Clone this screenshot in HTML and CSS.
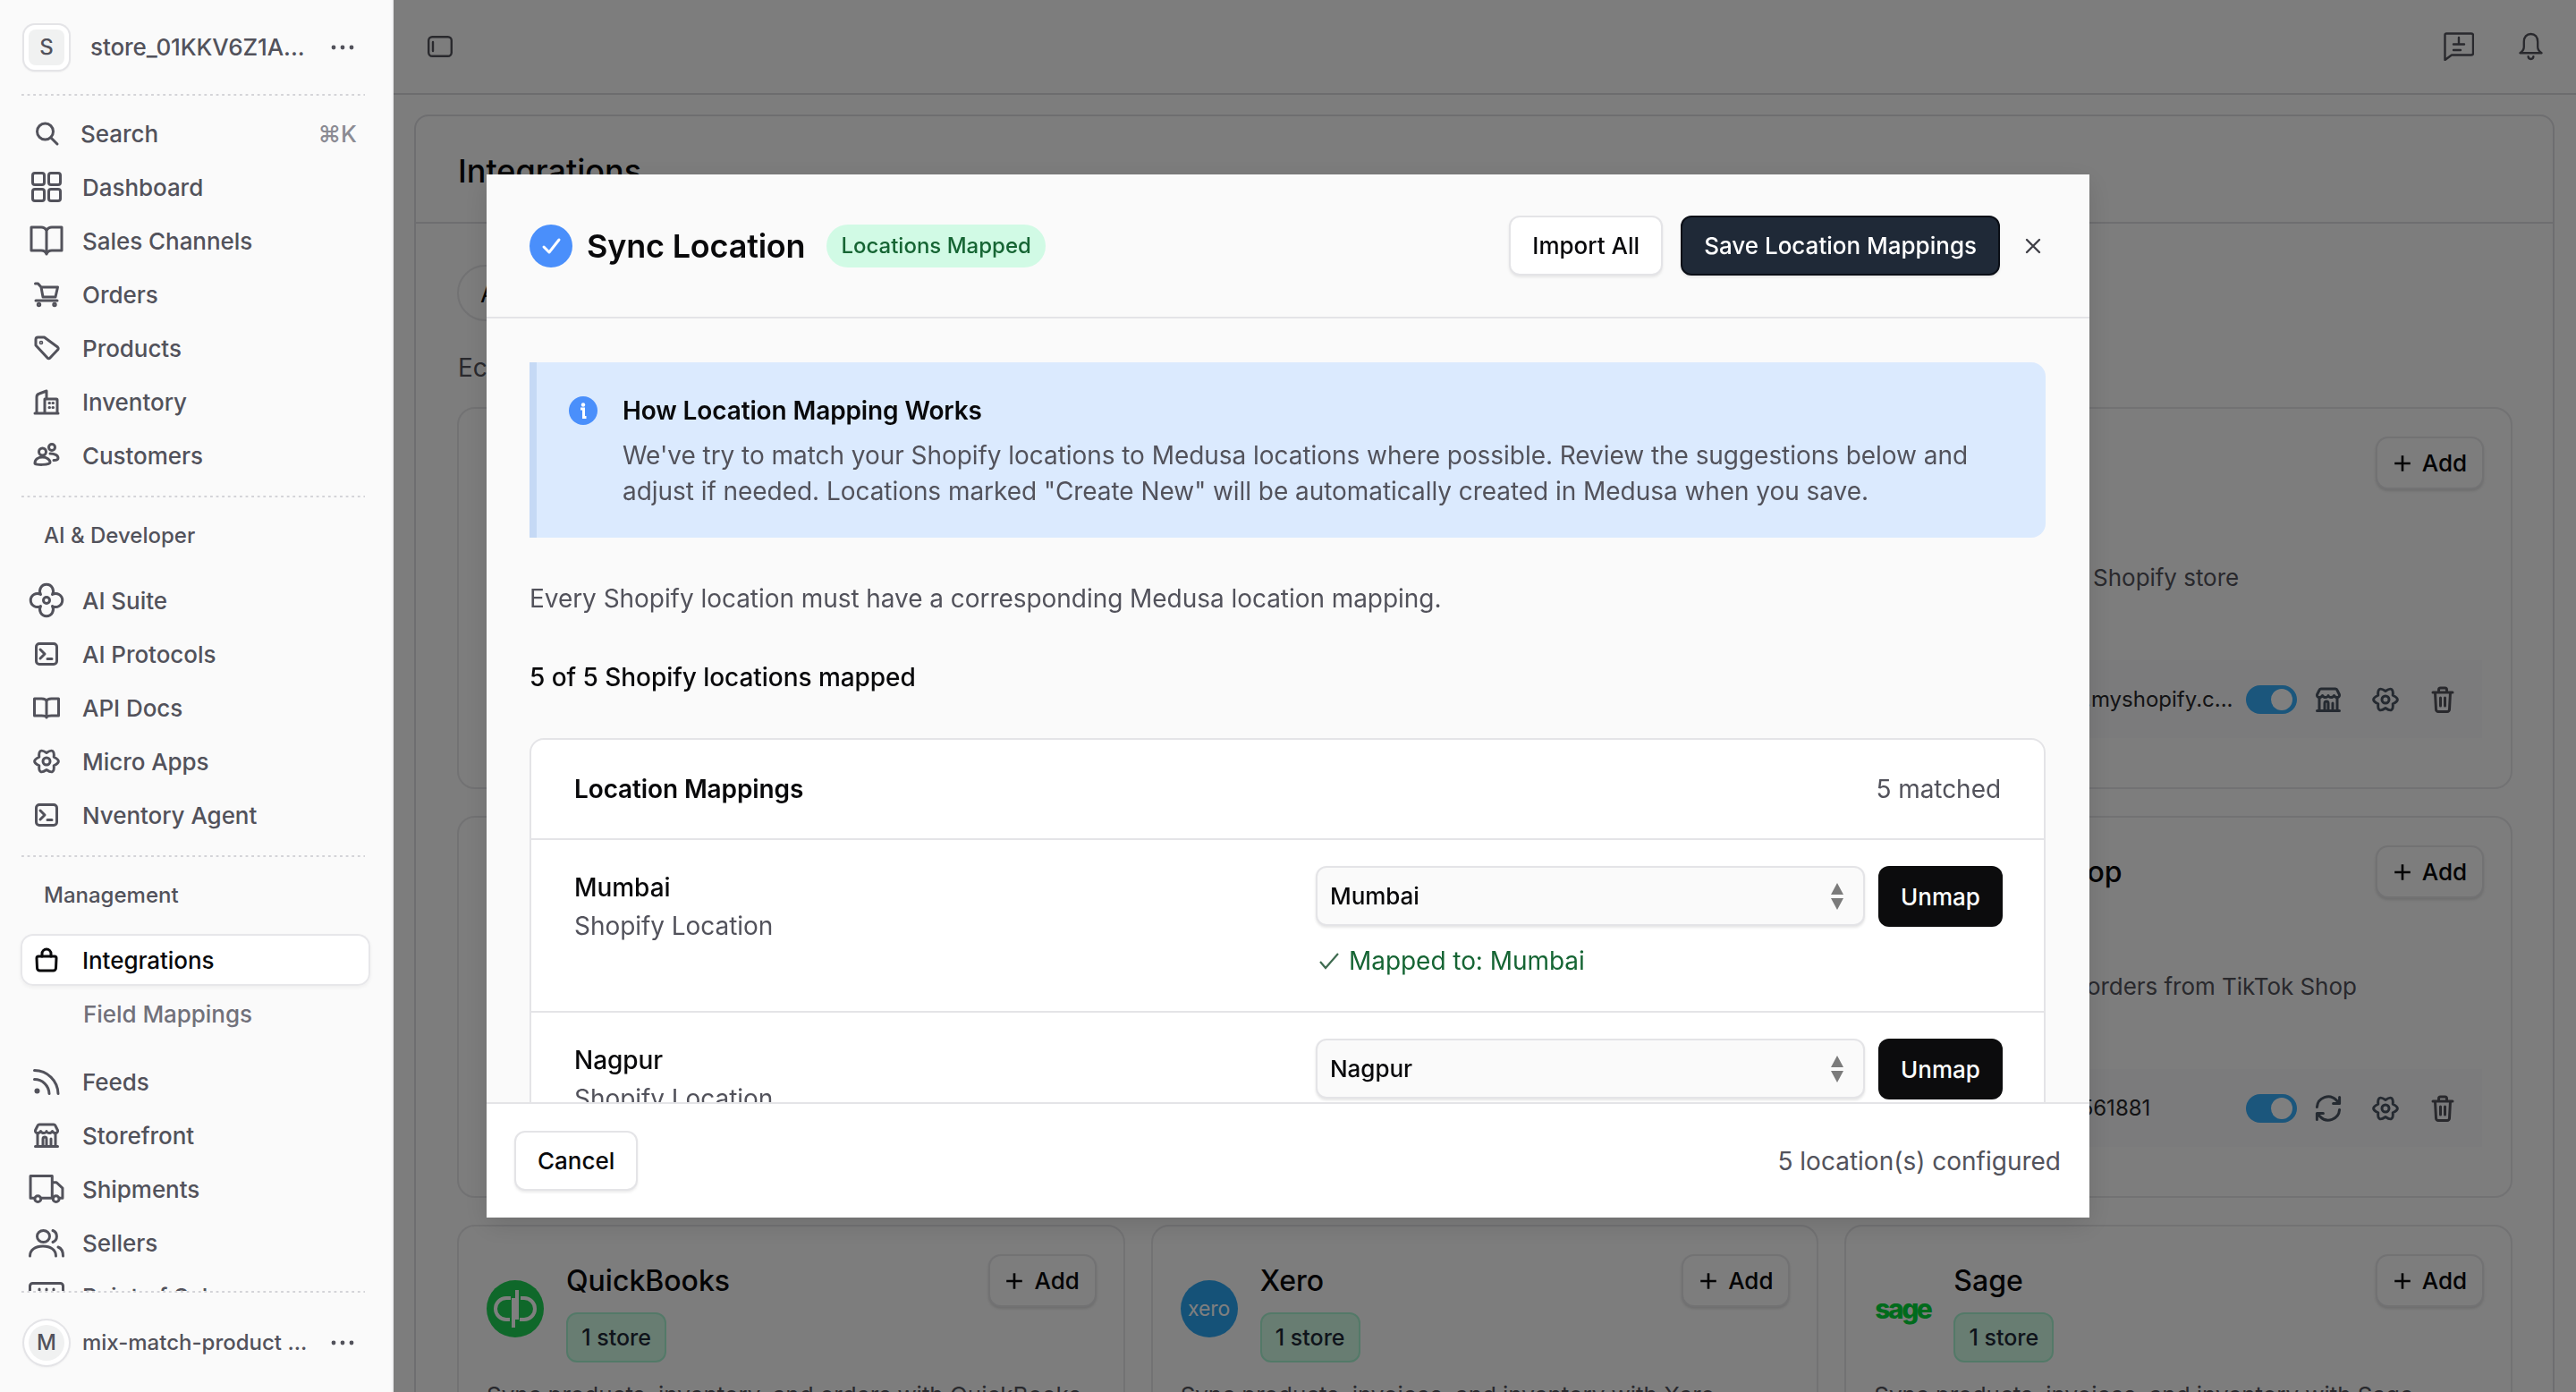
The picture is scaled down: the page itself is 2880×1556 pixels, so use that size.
FILE: index.html
```html
<!DOCTYPE html>
<html lang="en">
<head>
<meta charset="utf-8">
<title>Integrations</title>
<link rel="stylesheet" href="styles.css">
</head>
<body>
<div class="app">
  <aside class="sidebar">
    <div class="store-head">
      <div class="avatar"><span class="avatar-in">S</span></div>
      <span class="store-name">store_01KKV6Z1A...</span>
      <svg class="dots" viewBox="0 0 26 6"><circle cx="3" cy="3" r="2.4"/><circle cx="13" cy="3" r="2.4"/><circle cx="23" cy="3" r="2.4"/></svg>
    </div>
    <div class="dotted"></div>
    <nav class="nav-scroll">
      <div class="nav-group">
        <a class="nav-item search"><svg class="ic ic-26" viewBox="0 0 26 26"><circle cx="11.5" cy="11" r="9"/><path d="M18 18l7 7"/></svg><span>Search</span><kbd>⌘K</kbd></a>
        <a class="nav-item"><svg class="ic ic-34" viewBox="0 0 34 34"><rect x="1.5" y="1.5" width="13" height="13" rx="2.5"/><rect x="19.5" y="1.5" width="13" height="13" rx="2.5"/><rect x="1.5" y="19.5" width="13" height="13" rx="2.5"/><rect x="19.5" y="19.5" width="13" height="13" rx="2.5"/></svg><span>Dashboard</span></a>
        <a class="nav-item"><svg class="ic ic-36" viewBox="0 0 38 34"><path d="M2 2h11c3 0 5 1 6 4 1-3 3-4 6-4h11v26H25c-3 0-5 1-6 4-1-3-3-4-6-4H2zM19 6v26"/></svg><span>Sales Channels</span></a>
        <a class="nav-item"><svg class="ic ic-28" viewBox="0 0 28 28"><path d="M1.500 2h3l3.500 4 2 11h14l2.500-11H8M2 21h24"/><circle cx="5.500" cy="25.500" r="1.200"/><circle cx="23" cy="25.500" r="1.200"/></svg><span>Orders</span></a>
        <a class="nav-item"><svg class="ic ic-28" viewBox="0 0 28 28"><path d="M2 4.500A2.500 2.500 0 0 1 4.500 2h7l15 11a2 2 0 0 1 0 3l-8.500 9a2 2 0 0 1-3 0L2 11z"/><circle cx="8" cy="8" r=".8"/></svg><span>Products</span></a>
        <a class="nav-item"><svg class="ic ic-28" viewBox="0 0 28 28"><path d="M1 27h26M3 27V9a4 4 0 0 1 3-4l8-3v8M12 27V11h13a1 1 0 0 1 1 1v15"/><path d="M17 15.500h.5M21 15.500h.5M17 20.500h.5M21 20.500h.5"/></svg><span>Inventory</span></a>
        <a class="nav-item"><svg class="ic ic-28" viewBox="0 0 28 28"><circle cx="9.500" cy="10" r="4"/><circle cx="20" cy="5" r="3.500"/><path d="M1 23c0-4.500 4-7 8.500-7s8.500 2.500 8.500 6c0 3-17 3-17 1zM18 12c5 0 9 2 9 5 0 1.500-2 2.500-5 2.500"/></svg><span>Customers</span></a>
      </div>
      <div class="dotted"></div>
      <div class="section-label">AI &amp; Developer</div>
      <div class="nav-group tight">
        <a class="nav-item"><svg class="ic ic-36b" viewBox="0 0 36 36"><path d="M11.500 11.500A7.500 7.500 0 1 1 24.500 11.500A7.500 7.500 0 1 1 24.500 24.500A7.500 7.500 0 1 1 11.500 24.500A7.500 7.500 0 1 1 11.500 11.500z"/><circle cx="18" cy="18" r="3.500"/></svg><span>AI Suite</span></a>
        <a class="nav-item"><svg class="ic ic-26" viewBox="0 0 26 26"><rect x="1.500" y="1.500" width="23" height="23" rx="3.500"/><path d="M6 8l5 5-5 5M14 18.500h5"/></svg><span>AI Protocols</span></a>
        <a class="nav-item"><svg class="ic ic-28 ic-short" viewBox="0 0 30 25"><path d="M1.500 2h8c3 0 5 1 5.500 3 .5-2 2.500-3 5.500-3h8v19h-8c-3 0-5 .5-5.500 2-.5-1.500-2.500-2-5.500-2h-8zM15 5v18"/></svg><span>API Docs</span></a>
        <a class="nav-item"><svg class="ic ic-28" viewBox="0 0 28 27"><path d="M14 4Q23.250 -2.500 22.230 8.750Q32.500 13.500 22.230 18.250Q23.250 29.500 14 23Q4.750 29.500 5.770 18.250Q-4.500 13.500 5.770 8.750Q4.750 -2.500 14 4z"/><circle cx="14" cy="13.500" r="4"/></svg><span>Micro Apps</span></a>
        <a class="nav-item"><svg class="ic ic-26" viewBox="0 0 26 26"><rect x="1.500" y="1.500" width="23" height="23" rx="3.500"/><path d="M6 8l5 5-5 5M14 18.500h5"/></svg><span>Nventory Agent</span></a>
      </div>
      <div class="dotted"></div>
      <div class="section-label">Management</div>
      <a class="nav-item active"><svg class="ic ic-24" viewBox="0 0 24 26"><path d="M3 9h18a2 2 0 0 1 2 2l-.500 11a3 3 0 0 1-3 3h-15a3 3 0 0 1-3-3L1 11a2 2 0 0 1 2-2z"/><path d="M7 9V6a5 5 0 0 1 10 0v3"/></svg><span>Integrations</span></a>
      <a class="nav-item sub"><span>Field Mappings</span></a>
      <div class="nav-group lower">
        <a class="nav-item"><svg class="ic ic-30" viewBox="0 0 30 30"><path d="M1.500 2.500c14.500 0 26 11.500 26.500 26M1.500 12.500c9 0 16 7 16.500 16"/><circle cx="4.500" cy="25.500" r="3" class="solid"/></svg><span>Feeds</span></a>
        <a class="nav-item"><svg class="ic ic-28" viewBox="0 0 28 28"><path d="M6 2h16a2 2 0 0 1 2 1.500l2.500 5c.5 2-1 3-2.500 3s-3-1-3.500-2c-.5 1-2 2-3.500 2s-3-1-3-2c0 1-1.500 2-3 2s-3-1-3.500-2c-.5 1-2 2-3.500 2S1 10.500 1.500 8.500L4 3.500A2 2 0 0 1 6 2z"/><path d="M4 13v13M24 13v13M1.500 26.500h25M10 26v-8a2 2 0 0 1 4 0v8M19 26v-8"/></svg><span>Storefront</span></a>
        <a class="nav-item"><svg class="ic ic-40" viewBox="0 0 40 33"><path d="M6 27H1.500V1.500h25V27H14M26.500 9h5l7 6.500V27H35M27 27h-3"/><circle cx="10" cy="28" r="3.500"/><circle cx="31" cy="28" r="3.500"/></svg><span>Shipments</span></a>
        <a class="nav-item"><svg class="ic ic-40" viewBox="0 0 40 32"><ellipse cx="16.500" cy="9" rx="7" ry="6.500"/><path d="M1.500 31c0-7 6-11 14.500-11s14.500 4 14.500 11M27 2.500a7 7 0 0 1 0 13M33 21c4 1.500 5.500 5 5.500 10"/></svg><span>Sellers</span></a>
        <a class="nav-item"><svg class="ic ic-40" viewBox="0 0 40 32"><rect x="1.500" y="1.500" width="37" height="29" rx="3"/><path d="M12 8v1M20 8v1M28 8v1"/></svg><span>Point of Sale</span></a>
      </div>
    </nav>
    <div class="dotted"></div>
    <div class="user-foot">
      <div class="avatar round"><span class="avatar-in">M</span></div>
      <span class="user-name">mix-match-product ...</span>
      <svg class="dots" viewBox="0 0 26 6"><circle cx="3" cy="3" r="2.400"/><circle cx="13" cy="3" r="2.400"/><circle cx="23" cy="3" r="2.400"/></svg>
    </div>
  </aside>

  <main class="main">
    <header class="topbar">
      <svg class="panel-ic" viewBox="0 0 28 24"><rect x="1.200" y="1.200" width="25.600" height="21.600" rx="4"/><path d="M6 7v10"/></svg>
      <div class="top-actions">
        <svg class="msg-ic" viewBox="0 0 34 32"><path d="M3 1.500h28a2 2 0 0 1 2 2v20a2 2 0 0 1-2 2H9l-7.500 5.500V3a1.500 1.500 0 0 1 1.500-1.500z"/><path d="M17 6v6M11 13.500h12M11 20h8"/></svg>
        <svg class="bell-ic" viewBox="0 0 28 32"><path d="M14 1.500c5 0 8 3.500 8 9v6c0 3 1.500 5 4.500 7h-25c3-2 4.500-4 4.500-7v-6c0-5.500 3-9 8-9z"/><path d="M11 27.500a3 3 0 0 0 6 0"/></svg>
      </div>
    </header>
    <section class="page">
      <div class="page-head"><h1>Integrations</h1></div>
      <div class="page-body">
        <div class="tabs"><span class="tab">All</span></div>
        <h2 class="cat">Ecommerce</h2>
        <div class="cards">
          <div class="card"></div>
          <div class="card"></div>
          <div class="card">
            <div class="card-head">
              <span class="logo"></span>
              <div class="card-title"><h3>Shopify</h3><span class="stores">1 store</span></div>
              <button class="add"><svg viewBox="0 0 20 20"><path d="M10 2v16M2 10h16"/></svg>Add</button>
            </div>
            <p class="desc">Connects with your Shopify store</p>
            <div class="strip">
              <span class="strip-name">mix-match-product.myshopify.c...</span>
              <span class="toggle"></span>
              <svg class="act" viewBox="0 0 28 28"><path d="M6 2h16a2 2 0 0 1 2 1.500l2.500 5c.5 2-1 3-2.500 3s-3-1-3.500-2c-.5 1-2 2-3.500 2s-3-1-3-2c0 1-1.500 2-3 2s-3-1-3.500-2c-.5 1-2 2-3.500 2S1 10.500 1.500 8.500L4 3.500A2 2 0 0 1 6 2z"/><path d="M4 13v13M24 13v13M1.500 26.500h25M10 26v-8a2 2 0 0 1 4 0v8M19 26v-8"/></svg>
              <svg class="act" viewBox="0 0 28 27"><path d="M14 4Q23.250 -2.500 22.230 8.750Q32.500 13.500 22.230 18.250Q23.250 29.500 14 23Q4.750 29.500 5.770 18.250Q-4.500 13.500 5.770 8.750Q4.750 -2.500 14 4z"/><circle cx="14" cy="13.500" r="4"/></svg>
              <svg class="act trash" viewBox="0 0 25 30"><path d="M1.500 7h22M8 7V4a2 2 0 0 1 2-2h5a2 2 0 0 1 2 2v3M4 7l1 19a2.500 2.500 0 0 0 2.500 2.500h10A2.500 2.500 0 0 0 20 26l1-19M10 13v9M15 13v9"/></svg>
            </div>
          </div>
          <div class="card"></div>
          <div class="card"></div>
          <div class="card">
            <div class="card-head">
              <span class="logo"></span>
              <div class="card-title"><h3>TikTok Shop</h3><span class="stores">1 store</span></div>
              <button class="add"><svg viewBox="0 0 20 20"><path d="M10 2v16M2 10h16"/></svg>Add</button>
            </div>
            <p class="desc">Sync products and orders from TikTok Shop</p>
            <div class="strip">
              <span class="strip-name">TikTok Shop 17494561881</span>
              <span class="toggle"></span>
              <svg class="act" viewBox="2 2 20 20"><path d="M3 11a9 9 0 0 1 15.500-5.500L21 8M21 3v5h-5M21 13a9 9 0 0 1-15.500 5.500L3 16M3 21v-5h5"/></svg>
              <svg class="act" viewBox="0 0 28 27"><path d="M14 4Q23.250 -2.500 22.230 8.750Q32.500 13.500 22.230 18.250Q23.250 29.500 14 23Q4.750 29.500 5.770 18.250Q-4.500 13.500 5.770 8.750Q4.750 -2.500 14 4z"/><circle cx="14" cy="13.500" r="4"/></svg>
              <svg class="act trash" viewBox="0 0 25 30"><path d="M1.500 7h22M8 7V4a2 2 0 0 1 2-2h5a2 2 0 0 1 2 2v3M4 7l1 19a2.500 2.500 0 0 0 2.500 2.500h10A2.500 2.500 0 0 0 20 26l1-19M10 13v9M15 13v9"/></svg>
            </div>
          </div>
          <div class="card">
            <div class="card-head">
              <span class="logo"><svg class="qb" viewBox="0 0 64 64"><circle cx="32" cy="32" r="32"/><path d="M27 20h-5a12 12 0 0 0 0 24h4M30 20v33M37 44h5a12 12 0 0 0 0-24h-4M34 11v33"/></svg></span>
              <div class="card-title"><h3>QuickBooks</h3><span class="stores">1 store</span></div>
              <button class="add"><svg viewBox="0 0 20 20"><path d="M10 2v16M2 10h16"/></svg>Add</button>
            </div>
            <p class="desc">Sync products, inventory, and orders with QuickBooks</p>
          </div>
          <div class="card">
            <div class="card-head">
              <span class="logo xero">xero</span>
              <div class="card-title"><h3>Xero</h3><span class="stores">1 store</span></div>
              <button class="add"><svg viewBox="0 0 20 20"><path d="M10 2v16M2 10h16"/></svg>Add</button>
            </div>
            <p class="desc">Sync products, invoices, and inventory with Xero</p>
          </div>
          <div class="card">
            <div class="card-head">
              <span class="logo sage">sage</span>
              <div class="card-title"><h3>Sage</h3><span class="stores">1 store</span></div>
              <button class="add"><svg viewBox="0 0 20 20"><path d="M10 2v16M2 10h16"/></svg>Add</button>
            </div>
            <p class="desc">Sync products, invoices, and inventory with Sage</p>
          </div>
        </div>
      </div>
    </section>
  </main>
</div>

<div class="overlay"></div>

<div class="modal" role="dialog">
  <header class="modal-head">
    <svg class="check-badge" viewBox="0 0 48 48"><circle cx="24" cy="24" r="24"/><path d="M16 25l6 6 11-14"/></svg>
    <h2 class="modal-title">Sync Location</h2>
    <span class="pill">Locations Mapped</span>
    <span class="spacer"></span>
    <button class="btn">Import All</button>
    <button class="btn btn-navy">Save Location Mappings</button>
    <button class="close" aria-label="Close"><svg viewBox="0 0 18 18"><path d="M2 2l14 14M16 2L2 16"/></svg></button>
  </header>
  <div class="modal-body">
    <div class="info">
      <svg class="info-ic" viewBox="0 0 32 32"><circle cx="16" cy="16" r="16"/><circle cx="16" cy="9.500" r="2.200" class="w"/><path d="M13 14h3.500v9.500h3" class="wl"/></svg>
      <div class="info-text">
        <h3>How Location Mapping Works</h3>
        <p>We've try to match your Shopify locations to Medusa locations where possible. Review the suggestions below and adjust if needed. Locations marked "Create New" will be automatically created in Medusa when you save.</p>
      </div>
    </div>
    <p class="lead">Every Shopify location must have a corresponding Medusa location mapping.</p>
    <p class="count">5 of 5 Shopify locations mapped</p>
    <div class="map-card">
      <div class="map-head"><h3>Location Mappings</h3><span>5 matched</span></div>
      <div class="map-row">
        <div class="map-name"><strong>Mumbai</strong><span>Shopify Location</span></div>
        <div class="map-ctl">
          <div class="ctl-line">
            <div class="select"><span>Mumbai</span><svg viewBox="0 0 16 30"><path d="M8 0l7 13H1zM8 30L1 17h14z"/></svg></div>
            <button class="btn-unmap">Unmap</button>
          </div>
          <div class="mapped"><svg viewBox="0 0 24 20"><path d="M2 11l6 7L22 2"/></svg>Mapped to: Mumbai</div>
        </div>
      </div>
      <div class="map-row">
        <div class="map-name"><strong>Nagpur</strong><span>Shopify Location</span></div>
        <div class="map-ctl">
          <div class="ctl-line">
            <div class="select"><span>Nagpur</span><svg viewBox="0 0 16 30"><path d="M8 0l7 13H1zM8 30L1 17h14z"/></svg></div>
            <button class="btn-unmap">Unmap</button>
          </div>
        </div>
      </div>
    </div>
  </div>
  <footer class="modal-foot">
    <button class="btn">Cancel</button>
    <span>5 location(s) configured</span>
  </footer>
</div>
</body>
</html>
```
FILE: styles.css
```css
* { box-sizing: border-box; }
html, body { margin: 0; height: 1556px; overflow: hidden; }
body { font-family: Inter, "Liberation Sans", sans-serif; color: #09090b; background: #fafafa; font-size: 28px; }
h1, h2, h3, p { margin: 0; font: inherit; }
button { font: inherit; margin: 0; cursor: pointer; }
a { color: inherit; }

.app { display: flex; height: 1556px; }

/* sidebar */
.sidebar { position: relative; z-index: 3; width: 440px; flex: none; height: 1556px; display: flex; flex-direction: column; background: #fafafa; border-right: 2px solid #f0f0f1; color: #52525b; font-size: 26px; font-weight: 500; }
.store-head { height: 105px; flex: none; display: flex; align-items: center; padding: 0 42px 0 27px; }
.avatar { width: 50px; height: 50px; flex: none; border-radius: 12px; background: #fff; box-shadow: 0 0 0 2px #e4e4e7, 0 1px 2px 2px rgba(0,0,0,.04); display: flex; align-items: center; justify-content: center; }
.avatar-in { width: 40px; height: 40px; border-radius: 8px; background: #f0f1f1; display: flex; align-items: center; justify-content: center; font-size: 24px; color: #52525b; }
.avatar.round, .avatar.round .avatar-in { border-radius: 50%; }
.store-name { margin-left: 24px; flex: 1; white-space: nowrap; letter-spacing: -.1px; }
.dots { width: 26px; height: 6px; fill: #52525b; flex: none; }
.dotted { flex: none; height: 2px; margin: 0 30px 0 24px; background: linear-gradient(to right, #d4d4d8 2.400px, transparent 2.400px) 0 0 / 6.600px 2px repeat-x; }
.nav-scroll { flex: 1; min-height: 0; overflow: hidden; }
.nav-group { padding: 12px 0 15px; }
.nav-group.tight { padding: 0 0 15px; }
.nav-group.lower { padding: 16px 0 0; }
.nav-item { display: flex; align-items: center; height: 60px; margin: 0 24px 0 23px; padding-left: 9px; white-space: nowrap; }
.nav-item > span { flex: 1; letter-spacing: -.05px; }
.ic { flex: none; fill: none; stroke: currentColor; stroke-width: 3; stroke-linecap: round; stroke-linejoin: round; margin-right: 20px; width: 40px; height: 32px; overflow: visible; }
.ic * { vector-effect: non-scaling-stroke; }
.ic .solid { fill: currentColor; stroke: none; }
.ic-26 { height: 26px; padding: 0 7px; }
.ic-24 { height: 26px; padding: 0 8px; }
.ic-28 { height: 28px; padding: 0 6px; }
.ic-short { height: 25px; padding: 0 5px; }
.ic-30 { height: 30px; padding: 0 5px; }
.ic-34 { height: 34px; padding: 0 3px; }
.ic-36 { height: 34px; padding: 0 1px; }
.ic-36b { height: 36px; padding: 0 2px; }
.nav-item.search span { margin-left: -2px; }
kbd { font: inherit; color: #8b8b93; margin-right: 15px; font-size: 26px; }
.section-label { height: 85px; padding-left: 49px; display: flex; align-items: center; font-size: 24px; }
.nav-item.active { height: 58px; margin-top: 1px; margin-bottom: 1px; background: #fff; color: #09090b; border-radius: 14px; box-shadow: inset 0 0 0 2px #e7e7ea, 0 2px 4px rgba(0,0,0,.05); }
.nav-item.sub { color: #71717a; }
.nav-item.sub > span { margin-left: 61px; }
.user-foot { height: 111px; flex: none; display: flex; align-items: center; padding: 0 42px 0 27px; }
.user-name { margin-left: 15px; flex: 1; white-space: nowrap; font-size: 24px; }

/* main */
.main { flex: 1; min-width: 0; height: 1556px; overflow: hidden; background: #fafafa; }
.topbar { height: 106px; border-bottom: 2px solid #d9d9dc; display: flex; align-items: center; justify-content: space-between; padding: 0 37px 0 38px; color: #52525b; }
.panel-ic, .msg-ic, .bell-ic { fill: none; stroke: currentColor; stroke-width: 2.400; stroke-linejoin: round; stroke-linecap: round; }
.panel-ic { width: 28px; height: 24px; }
.top-actions { display: flex; align-items: center; gap: 50px; }
.msg-ic { width: 34px; height: 32px; }
.bell-ic { width: 27px; height: 32px; }
.page { margin: 22px 24px 0 23px; border: 2px solid #dcdce0; border-radius: 16px 16px 0 0; }
.page-head { height: 120px; padding: 3px 0 0 47px; display: flex; align-items: center; border-bottom: 2px solid #dcdce0; font-size: 36px; font-weight: 500; }
.page-body { padding: 46px 45px 0 46px; }
.tabs { height: 63px; }
.tab { display: inline-flex; align-items: center; height: 63px; width: 200px; padding-left: 24px; border: 2px solid #e4e4e7; border-radius: 32px; }
.cat { margin-top: 32px; padding-left: 1px; line-height: 40px; color: #52525b; }
.cards { margin-top: 24px; display: grid; grid-template-columns: repeat(3, 1fr); grid-auto-rows: 427px; gap: 30px 29px; }
.card { border: 2px solid #e4e4e7; border-radius: 20px; padding: 31px 30px 0 31px; min-width: 0; }
.card-head { display: flex; align-items: center; }
.logo { width: 64px; height: 64px; flex: none; margin-right: 25px; display: flex; align-items: center; justify-content: center; }
.qb { width: 64px; height: 64px; }
.qb path { fill: none; stroke: #fff; stroke-width: 4; }
.qb circle { fill: #1fd155; }
.xero { border-radius: 50%; background: #2aa5f0; color: #fff; font-size: 23px; }
.sage { color: #00d639; font-size: 30px; font-weight: 800; letter-spacing: -2.500px; }
.card-title { flex: 1; min-width: 0; white-space: nowrap; }
.card-title h3 { font-size: 32px; line-height: 60px; font-weight: 500; }
.stores { display: inline-flex; align-items: center; justify-content: center; margin-top: 5px; height: 56px; width: 112px; background: #d1fae5; border: 2px solid #a7f3d0; border-radius: 12px; font-size: 25px; font-weight: 500; color: #1f2937; }
.add { align-self: flex-start; width: 121px; height: 59px; flex: none; background: #fafafa; border: 2px solid #e4e4e7; border-radius: 14px; box-shadow: 0 2px 3px rgba(0,0,0,.12); display: flex; align-items: center; justify-content: center; gap: 11px; font-size: 26px; font-weight: 500; color: #09090b; padding: 0; }
.add svg { width: 22px; height: 22px; fill: none; stroke: currentColor; stroke-width: 2.400; }
.desc { margin-top: 17px; line-height: 40px; font-size: 26px; color: #52525b; white-space: nowrap; letter-spacing: -.04px; }
.strip { margin-top: 72px; height: 87px; width: 680px; background: #f7f7f8; display: flex; align-items: center; }
.strip-name { font-size: 24px; font-weight: 400; color: #27272a; white-space: nowrap; flex: none; width: 416px; padding-left: 16px; }
.toggle { position: relative; width: 57px; height: 32px; flex: none; border-radius: 16px; background: #36acf8; }
.toggle::after { content: ""; position: absolute; right: 5px; top: 4px; width: 24px; height: 24px; border-radius: 50%; background: #fff; }
.act { width: 28px; height: 28px; flex: none; margin-left: 36px; fill: none; stroke: #4b5563; stroke-width: 3; stroke-linecap: round; stroke-linejoin: round; overflow: visible; }
.act * { vector-effect: non-scaling-stroke; }
.toggle + .act { margin-left: 21px; }
.act.trash { height: 30px; stroke: #52525b; }

/* overlay + modal */
.overlay { position: fixed; z-index: 1; left: 440px; top: 0; right: 0; bottom: 0; background: rgba(0,0,0,.5); }
.modal { position: fixed; z-index: 2; left: 544px; top: 195px; width: 1792px; height: 1166px; display: flex; flex-direction: column; background: #fafafa; box-shadow: 0 8px 28px rgba(0,0,0,.12); }
.modal-head { height: 161px; flex: none; display: flex; align-items: center; padding: 0 48px; border-bottom: 2px solid #e4e4e7; }
.check-badge { width: 48px; height: 48px; flex: none; margin-right: 16px; }
.check-badge circle { fill: #4a8ffb; }
.check-badge path { fill: none; stroke: #fff; stroke-width: 3; stroke-linecap: round; stroke-linejoin: round; }
.modal-title { font-size: 36px; font-weight: 600; white-space: nowrap; margin-right: 24px; letter-spacing: -.2px; }
.pill { height: 48px; padding: 0 16px; display: flex; align-items: center; background: #d1fae5; color: #166534; border-radius: 24px; font-size: 24px; font-weight: 500; white-space: nowrap; }
.spacer { flex: 1; }
.btn { height: 67px; padding: 0 24px; background: #fff; border: 2px solid #e4e4e7; border-radius: 12px; font-size: 26px; font-weight: 500; color: #09090b; box-shadow: 0 2px 3px rgba(0,0,0,.08); white-space: nowrap; }
.btn-navy { margin-left: 20px; background: #1f2937; border-color: #0b0f17; color: #fff; }
.close { width: 30px; height: 30px; margin-left: 22px; padding: 6px; background: none; border: 0; color: #3f3f46; display: flex; }
.close svg { width: 18px; height: 18px; fill: none; stroke: currentColor; stroke-width: 2.400; stroke-linecap: round; }
.modal-body { flex: 1; min-height: 0; overflow: hidden; padding: 49px 49px 0 48px; letter-spacing: -.05px; }
.info { height: 196px; display: flex; background: #dbeafe; border-left: 8px solid #c5d9f5; border-radius: 0 16px 16px 0; padding: 34px 36px 0; }
.info-ic { width: 32px; height: 32px; flex: none; margin: 4px 28px 0 0; }
.info-ic circle { fill: #4a8ffb; }
.info-ic .w { fill: #fff; }
.info-ic .wl { fill: none; stroke: #fff; stroke-width: 3; }
.info h3 { font-weight: 600; line-height: 40px; letter-spacing: -.12px; }
.info p { margin-top: 10px; line-height: 40px; color: #52525b; }
.lead { margin-top: 48px; line-height: 40px; color: #52525b; }
.count { margin-top: 48px; line-height: 40px; font-weight: 500; }
.map-card { margin-top: 48px; background: #fff; border: 2px solid #e4e4e7; border-radius: 16px 16px 0 0; }
.map-head { height: 112px; padding: 0 48px; display: flex; align-items: center; justify-content: space-between; border-bottom: 2px solid #e4e4e7; color: #52525b; }
.map-head h3 { font-weight: 600; color: #09090b; letter-spacing: -.12px; }
.map-row { display: flex; justify-content: space-between; padding: 29px 46px 36px 48px; border-bottom: 2px solid #e4e4e7; }
.map-name { display: flex; flex-direction: column; padding-top: 2px; }
.map-name strong { font-weight: 500; line-height: 44px; }
.map-name span { line-height: 42px; color: #52525b; }
.map-ctl { width: 768px; }
.ctl-line { display: flex; gap: 15px; }
.select { flex: 1; height: 67px; background: #fafafa; border: 2px solid #e4e4e7; border-radius: 12px; box-shadow: 0 2px 3px rgba(0,0,0,.1); padding: 0 14px; display: flex; align-items: center; justify-content: space-between; font-weight: 450; font-size: 26px; }
.select svg { width: 16px; height: 30px; fill: #7b7b7b; margin-right: 7px; }
.btn-unmap { width: 139px; height: 68px; background: #0c0c0d; border: 0; border-radius: 12px; color: #fff; font-size: 26px; font-weight: 500; padding: 0; }
.mapped { margin-top: 18px; display: flex; align-items: center; line-height: 40px; color: #166534; }
.mapped svg { width: 24px; height: 20px; margin: 0 10px 0 3px; fill: none; stroke: #3f6b50; stroke-width: 2.200; }
.modal-foot { height: 129px; flex: none; background: #fff; border-top: 2px solid #e4e4e7; padding: 0 32px 0 31px; display: flex; align-items: center; justify-content: space-between; color: #52525b; }
```
